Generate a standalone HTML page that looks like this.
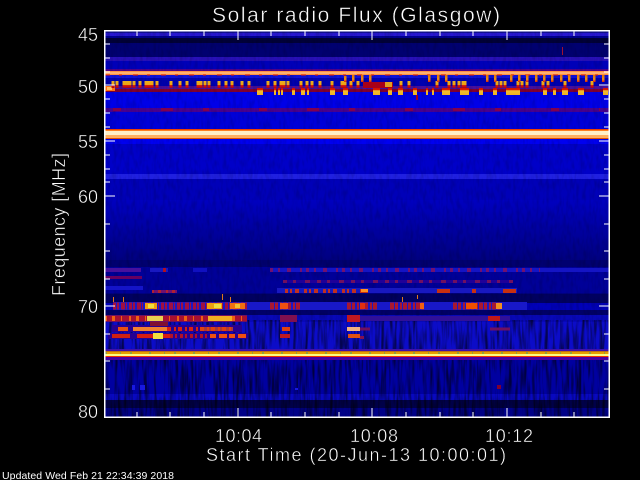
<!DOCTYPE html>
<html><head><meta charset="utf-8"><style>
html,body{margin:0;padding:0;background:#000;width:640px;height:480px;overflow:hidden}
svg{display:block}
text{font-family:"Liberation Sans",sans-serif;fill:#fff;stroke:#000;stroke-width:.45px;paint-order:fill stroke}
</style></head><body>
<svg width="640" height="480" viewBox="0 0 640 480" xmlns="http://www.w3.org/2000/svg">
<defs>
<filter id="st" x="0" y="0" width="1" height="1" color-interpolation-filters="sRGB"><feTurbulence type="fractalNoise" baseFrequency=".33 .03" numOctaves="2" seed="7"/><feColorMatrix values="0 0 0 0 0 0 0 0 0 0 0 0 0 0 0 3 0 0 0 -1.25"/></filter>
<filter id="fn" x="0" y="0" width="1" height="1" color-interpolation-filters="sRGB"><feTurbulence type="fractalNoise" baseFrequency=".3 .1" numOctaves="2" seed="3"/><feColorMatrix values="0 0 0 0 0 0 0 0 0 0 0 0 0 0 0 2.5 0 0 0 -1"/></filter>
<linearGradient id="a" gradientUnits="userSpaceOnUse" x1="0" y1="81" x2="0" y2="88"><stop offset="0" stop-color="#e8b020"/><stop offset=".55" stop-color="#f0a010"/><stop offset=".6" stop-color="#e02000"/><stop offset="1" stop-color="#a00020"/></linearGradient>
<linearGradient id="b" gradientUnits="userSpaceOnUse" x1="0" y1="75" x2="0" y2="82"><stop offset="0" stop-color="#e07000"/><stop offset=".6" stop-color="#f09010"/><stop offset="1" stop-color="#e02000"/></linearGradient>
<linearGradient id="c" gradientUnits="userSpaceOnUse" x1="0" y1="88" x2="0" y2="95"><stop offset="0" stop-color="#d01000"/><stop offset=".3" stop-color="#e02000"/><stop offset=".35" stop-color="#f0c030"/><stop offset="1" stop-color="#f0b020"/></linearGradient>
<linearGradient id="up" x1="0" y1="0" x2="0" y2="1"><stop offset="0" stop-color="#0000c0"/><stop offset="1" stop-color="#000080"/></linearGradient>
</defs>
<g shape-rendering="crispEdges">
<!-- base rows -->
<rect x="105" y="31" width="504" height="386" fill="#000080"/>
<rect x="105" y="31" width="504" height="2" fill="#101090"/>
<rect x="105" y="33" width="504" height="3" fill="#2818d0"/>
<rect x="105" y="36" width="504" height="2" fill="#000090"/>
<rect x="105" y="38" width="504" height="5" fill="#000038"/>
<rect x="105" y="43" width="504" height="14" fill="#000070"/>
<rect x="105" y="57" width="504" height="4" fill="#2810b8"/>
<rect x="105" y="61" width="504" height="8" fill="#0000b8"/>
<rect x="105" y="69" width="504" height="3" fill="#500088"/>
<rect x="105" y="75" width="504" height="3" fill="#1010d8"/>
<rect x="105" y="78" width="504" height="8" fill="#0000b0"/>
<rect x="105" y="86" width="504" height="3" fill="#48109c"/>
<rect x="105" y="89" width="504" height="3" fill="#800030"/>
<rect x="105" y="92" width="504" height="16" fill="#0000e8"/>
<rect x="105" y="108" width="504" height="4" fill="#480090"/>
<rect x="105" y="112" width="504" height="17" fill="#0000d8"/>
<rect x="105" y="138" width="504" height="6" fill="#0000f0"/>
<rect x="105" y="144" width="504" height="30" fill="#0000c8"/>
<rect x="105" y="174" width="504" height="5" fill="#2020e0"/>
<rect x="105" y="179" width="504" height="21" fill="#0000b8"/>
<rect x="105" y="200" width="504" height="60" fill="url(#up)"/>
<rect x="105" y="260" width="504" height="7" fill="#000070"/>
<rect x="105" y="267" width="504" height="26" fill="#000098"/>
<rect x="105" y="294" width="504" height="9" fill="#000060"/>
<rect x="105" y="303" width="504" height="7" fill="#0000b8"/>
<rect x="105" y="310" width="504" height="5" fill="#000068"/>
<rect x="105" y="315" width="504" height="7" fill="#0808b8"/>
<rect x="105" y="322" width="504" height="30" fill="#0c0cc8"/>
<rect x="105" y="357" width="504" height="39" fill="#0000a0"/>
<rect x="105" y="394" width="504" height="6" fill="#0808c0"/>
<rect x="105" y="400" width="504" height="8" fill="#000048"/>
<rect x="105" y="408" width="504" height="9" fill="#000088"/>
<rect x="105" y="31" width="504" height="290" filter="url(#fn)" opacity=".13"/>
<rect x="105" y="320" width="504" height="97" filter="url(#st)" opacity=".6"/>
<!-- bright lines -->
<rect x="105" y="71" width="504" height="4" fill="#ff9040"/>
<rect x="105" y="72" width="504" height="2" fill="#ffb070"/>
<path d="M105 75H609" stroke="#e02000" stroke-width="1" stroke-dasharray="5 9 3 11"/>
<rect x="105" y="129" width="504" height="2" fill="#f04000"/>
<rect x="105" y="130" width="504" height="1" fill="#ff8020"/>
<rect x="105" y="131" width="504" height="4" fill="#fff0c8"/>
<rect x="105" y="135" width="504" height="3" fill="#ffb060"/>
<rect x="105" y="138" width="504" height="1" fill="#e05000"/>
<rect x="105" y="349" width="504" height="3" fill="#4010a8"/>
<rect x="105" y="352" width="504" height="2" fill="#e8a000"/>
<path d="M105 352.500H609" stroke="#90a040" stroke-width="3" stroke-dasharray="2 13 1 9 2 17"/>
<rect x="105" y="351" width="504" height="1" fill="#c07010"/>
<rect x="105" y="354" width="504" height="2" fill="#ffff80"/>
<rect x="105" y="356" width="504" height="1" fill="#f03000"/>
<rect x="105" y="357" width="504" height="3" fill="#4800a0"/>
<!-- 50 MHz region -->
<rect x="105" y="86" width="10" height="5" fill="#ff7010"/>
<rect x="107" y="87" width="5" height="3" fill="#ffc060"/>
<rect x="363" y="82" width="30" height="6" fill="#a80018"/>
<rect x="385" y="82" width="7" height="5" fill="#e0a020"/>
<path fill="none" stroke="url(#a)" stroke-width="3" d="M113 81v7M117 81v7M124 81v7M127 81v7M130 81v7M134 81v7M140 81v7M146 81v7M149 81v7M152 81v7M157 81v7M171 81v7M180 81v7M187 81v7M198 81v7M201 81v7M205 81v7M209 81v7M219 81v7M226 81v7M232 81v7M242 81v7M249 81v7M268 81v7M275 81v7M281 81v7M284 81v7M288 81v7M301 81v7M307 81v7M312 81v7M320 81v7M332 81v7M342 81v7M345 81v7M351 81v7M358 81v7M401 81v7M409 81v7M437 81v7M449 81v7M454 81v7M459 81v7M463 81v7M465 81v7M497 81v7M501 81v7M505 81v7M518 81v7M522 81v7M527 81v7M543 81v7M548 81v7M565 81v7M592 81v7"/>
<path fill="none" stroke="url(#b)" stroke-width="2.500" d="M362 75v7M370 75v7M429 75v7M438 75v7M446 75v7M487 75v7M495 75v7M511 75v7M519 75v7M527 75v7M536 75v7M544 75v7M552 75v7M561 75v7M569 75v7M578 75v7M586 75v7M594 75v7M603 75v7M353 75v7M345 76v6"/>
<path fill="url(#c)" d="M257 88h6v7h-6zM274 88h2v7h-2zM278 88h2v7h-2zM281 88h2v7h-2zM292 88h3v7h-3zM301 88h4v7h-4zM307 88h2v7h-2zM330 88h5v7h-5zM343 88h5v7h-5zM373 88h7v7h-7zM388 88h4v7h-4zM398 88h5v7h-5zM413 88h4v7h-4zM426 88h2v7h-2zM432 88h2v7h-2zM442 88h8v7h-8zM460 88h9v7h-9zM479 88h4v7h-4zM493 88h4v7h-4zM506 88h14v7h-14zM543 88h4v7h-4zM553 88h3v7h-3zM562 88h6v7h-6zM578 88h6v7h-6zM603 88h5v7h-5z"/>
<rect x="416" y="95" width="2" height="5" fill="#a00018"/>
<rect x="562" y="47" width="1" height="8" fill="#a01030"/>
<path d="M113 109.500H600" stroke="#800050" stroke-width="3" stroke-dasharray="8 40 12 30 6 50"/>
<!-- lower activity, faint -->
<rect x="105" y="268" width="36" height="4" fill="#48109c"/>
<rect x="150" y="268" width="18" height="4" fill="#1818c0"/>
<rect x="163" y="268" width="3" height="4" fill="#b01020"/>
<rect x="193" y="268" width="14" height="4" fill="#1010c0"/>
<rect x="270" y="268" width="339" height="4" fill="#1414c4"/>
<path d="M270 270H540" stroke="#701070" stroke-width="4" stroke-dasharray="3 5 2 7 4 9 2 4"/>
<rect x="105" y="276" width="37" height="3" fill="#680060"/>
<rect x="105" y="286" width="38" height="4" fill="#1414c8"/>
<rect x="283" y="280" width="230" height="3" fill="#200098"/>
<path d="M283 281.500H513" stroke="#701060" stroke-width="3" stroke-dasharray="4 6 3 9 5 7"/>
<rect x="152" y="290" width="25" height="3" fill="#701070"/>
<path d="M152 291.500H177" stroke="#b02030" stroke-width="3" stroke-dasharray="2 4 3 5"/>
<rect x="277" y="288" width="240" height="5" fill="#1818c0"/>
<path d="M285 291H360" stroke="#c03020" stroke-width="4" stroke-dasharray="3 2 2 3 4 5"/>
<path d="M360 291H368M437 291H450M472 291H476M503 291H516" stroke="#c83010" stroke-width="4"/>
<rect x="361" y="289" width="7" height="3" fill="#ff9020"/>
<path fill="#e07818" d="M113 297h1v5h-1zM123 297h1v5h-1zM222 294h1v6h-1zM230 297h1v5h-1zM402 297h1v5h-1zM417 295h1v4h-1z"/>
<!-- row 306 -->
<rect x="113" y="302" width="414" height="8" fill="#1818c8"/>
<path d="M113 306H247" stroke="#a01040" stroke-width="7" stroke-dasharray="3 1 2 2 4 1 1 2"/>
<path d="M270 306H300M347 306H360M360 306H377M390 306H424M453 306H500" stroke="#a81830" stroke-width="7" stroke-dasharray="4 1 3 2 2 1"/>
<rect x="145" y="303" width="12" height="6" fill="#f0a010"/><rect x="148" y="304" width="6" height="4" fill="#f0e040"/>
<rect x="207" y="303" width="15" height="6" fill="#f0a010"/><rect x="214" y="304" width="7" height="4" fill="#f0e040"/>
<rect x="230" y="303" width="15" height="6" fill="#f07010"/><rect x="235" y="304" width="5" height="4" fill="#f0c030"/>
<rect x="280" y="303" width="8" height="6" fill="#f05010"/>
<rect x="466" y="303" width="11" height="6" fill="#f05000"/><rect x="496" y="303" width="6" height="6" fill="#f09020"/>
<rect x="420" y="303" width="4" height="6" fill="#f06010"/><rect x="360" y="303" width="5" height="6" fill="#e03010"/>
<!-- row 318 -->
<rect x="105" y="315" width="142" height="7" fill="#701060"/>
<rect x="105" y="316" width="142" height="5" fill="#a81030"/>
<path d="M105 318.500H247" stroke="#f06010" stroke-width="5" stroke-dasharray="2 5 3 6 1 7"/>
<rect x="147" y="316" width="16" height="5" fill="#e8d050"/>
<rect x="208" y="316" width="24" height="5" fill="#f0b020"/>
<rect x="280" y="315" width="17" height="7" fill="#801050"/>
<rect x="347" y="315" width="13" height="7" fill="#c01820"/>
<rect x="360" y="316" width="150" height="5" fill="#301098"/>
<rect x="488" y="316" width="12" height="5" fill="#c01818"/>
<!-- row 328 -->
<rect x="112" y="325" width="130" height="7" fill="#280090"/>
<rect x="118" y="327" width="10" height="4" fill="#e85010"/>
<rect x="133" y="327" width="34" height="4" fill="#f08030"/>
<path d="M167 329H233" stroke="#d82010" stroke-width="4" stroke-dasharray="4 3 2 2"/>
<rect x="200" y="327" width="33" height="4" fill="#e05010" opacity=".7"/>
<rect x="282" y="327" width="8" height="4" fill="#e04010"/>
<rect x="347" y="327" width="13" height="4" fill="#f0b080"/>
<path d="M360 329H370M490 329H510" stroke="#701060" stroke-width="3"/>
<rect x="150" y="322" width="18" height="4" fill="#801030"/>
<!-- row 336 -->
<rect x="108" y="333" width="140" height="6" fill="#280090"/>
<path d="M112 336H130" stroke="#d02010" stroke-width="4"/>
<rect x="137" y="334" width="33" height="4" fill="#d81c10"/>
<rect x="153" y="333" width="10" height="6" fill="#f0e040"/>
<path d="M170 336H207" stroke="#b01028" stroke-width="4" stroke-dasharray="3 2 2 3"/>
<path d="M210 336H247" stroke="#f05010" stroke-width="4" stroke-dasharray="6 3 8 2"/>
<rect x="280" y="334" width="10" height="4" fill="#c01820"/>
<rect x="348" y="334" width="12" height="4" fill="#e05010"/>
<rect x="360" y="336" width="4" height="3" fill="#801050"/>
<!-- small blue spots -->
<path fill="#1818e0" d="M132 385h3v5h-3zM140 385h5v5h-5zM295 388h3v2h-3z"/>
<rect x="497" y="385" width="4" height="4" fill="#800030"/>
</g>
<!-- frame -->
<g fill="#fff" shape-rendering="crispEdges">
<rect x="104" y="30" width="506" height="1.500"/><rect x="104" y="416.500" width="506" height="1.500"/>
<rect x="104" y="30" width="1.500" height="388"/><rect x="608.500" y="30" width="1.500" height="388"/>
</g>
<path stroke="#fff" stroke-width="1.200" fill="none" shape-rendering="crispEdges" d="M137 31v5M170 31v5M204 31v5M238 31v9M271 31v5M305 31v5M339 31v5M372 31v9M406 31v5M440 31v5M473 31v5M507 31v9M541 31v5M574 31v5M137 417v-5M170 417v-5M204 417v-5M238 417v-9M271 417v-5M305 417v-5M339 417v-5M372 417v-9M406 417v-5M440 417v-5M473 417v-5M507 417v-9M541 417v-5M574 417v-5M105 44h5M105 58h5M105 72h5M105 85h10M105 99h5M105 113h5M105 127h5M105 141h10M105 155h5M105 169h5M105 182h5M105 196h10M105 224h5M105 251h5M105 279h5M105 306h10M105 334h5M105 361h5M105 389h5M609 44h-5M609 58h-5M609 72h-5M609 85h-10M609 99h-5M609 113h-5M609 127h-5M609 141h-10M609 155h-5M609 169h-5M609 182h-5M609 196h-10M609 224h-5M609 251h-5M609 279h-5M609 306h-10M609 334h-5M609 361h-5M609 389h-5"/>
<!-- labels -->
<text x="212" y="22" font-size="21" textLength="288" lengthAdjust="spacing">Solar radio Flux (Glasgow)</text>
<g font-size="18">
<text x="78" y="41" textLength="20">45</text>
<text x="78" y="93" textLength="20">50</text>
<text x="78" y="148" textLength="20">55</text>
<text x="78" y="203" textLength="20">60</text>
<text x="78" y="313" textLength="20">70</text>
<text x="78" y="418" textLength="20">80</text>
<text x="215" y="442" textLength="47">10:04</text>
<text x="350" y="442" textLength="48">10:08</text>
<text x="485" y="442" textLength="48">10:12</text>
<text x="206" y="461" textLength="300" lengthAdjust="spacing">Start Time (20-Jun-13 10:00:01)</text>
<text transform="translate(65,296) rotate(-90)" textLength="143" lengthAdjust="spacing">Frequency [MHz]</text>
</g>
<text x="2" y="479" font-size="10.500" textLength="172" lengthAdjust="spacing" style="stroke:none">Updated Wed Feb 21 22:34:39 2018</text>
</svg>
</body></html>
